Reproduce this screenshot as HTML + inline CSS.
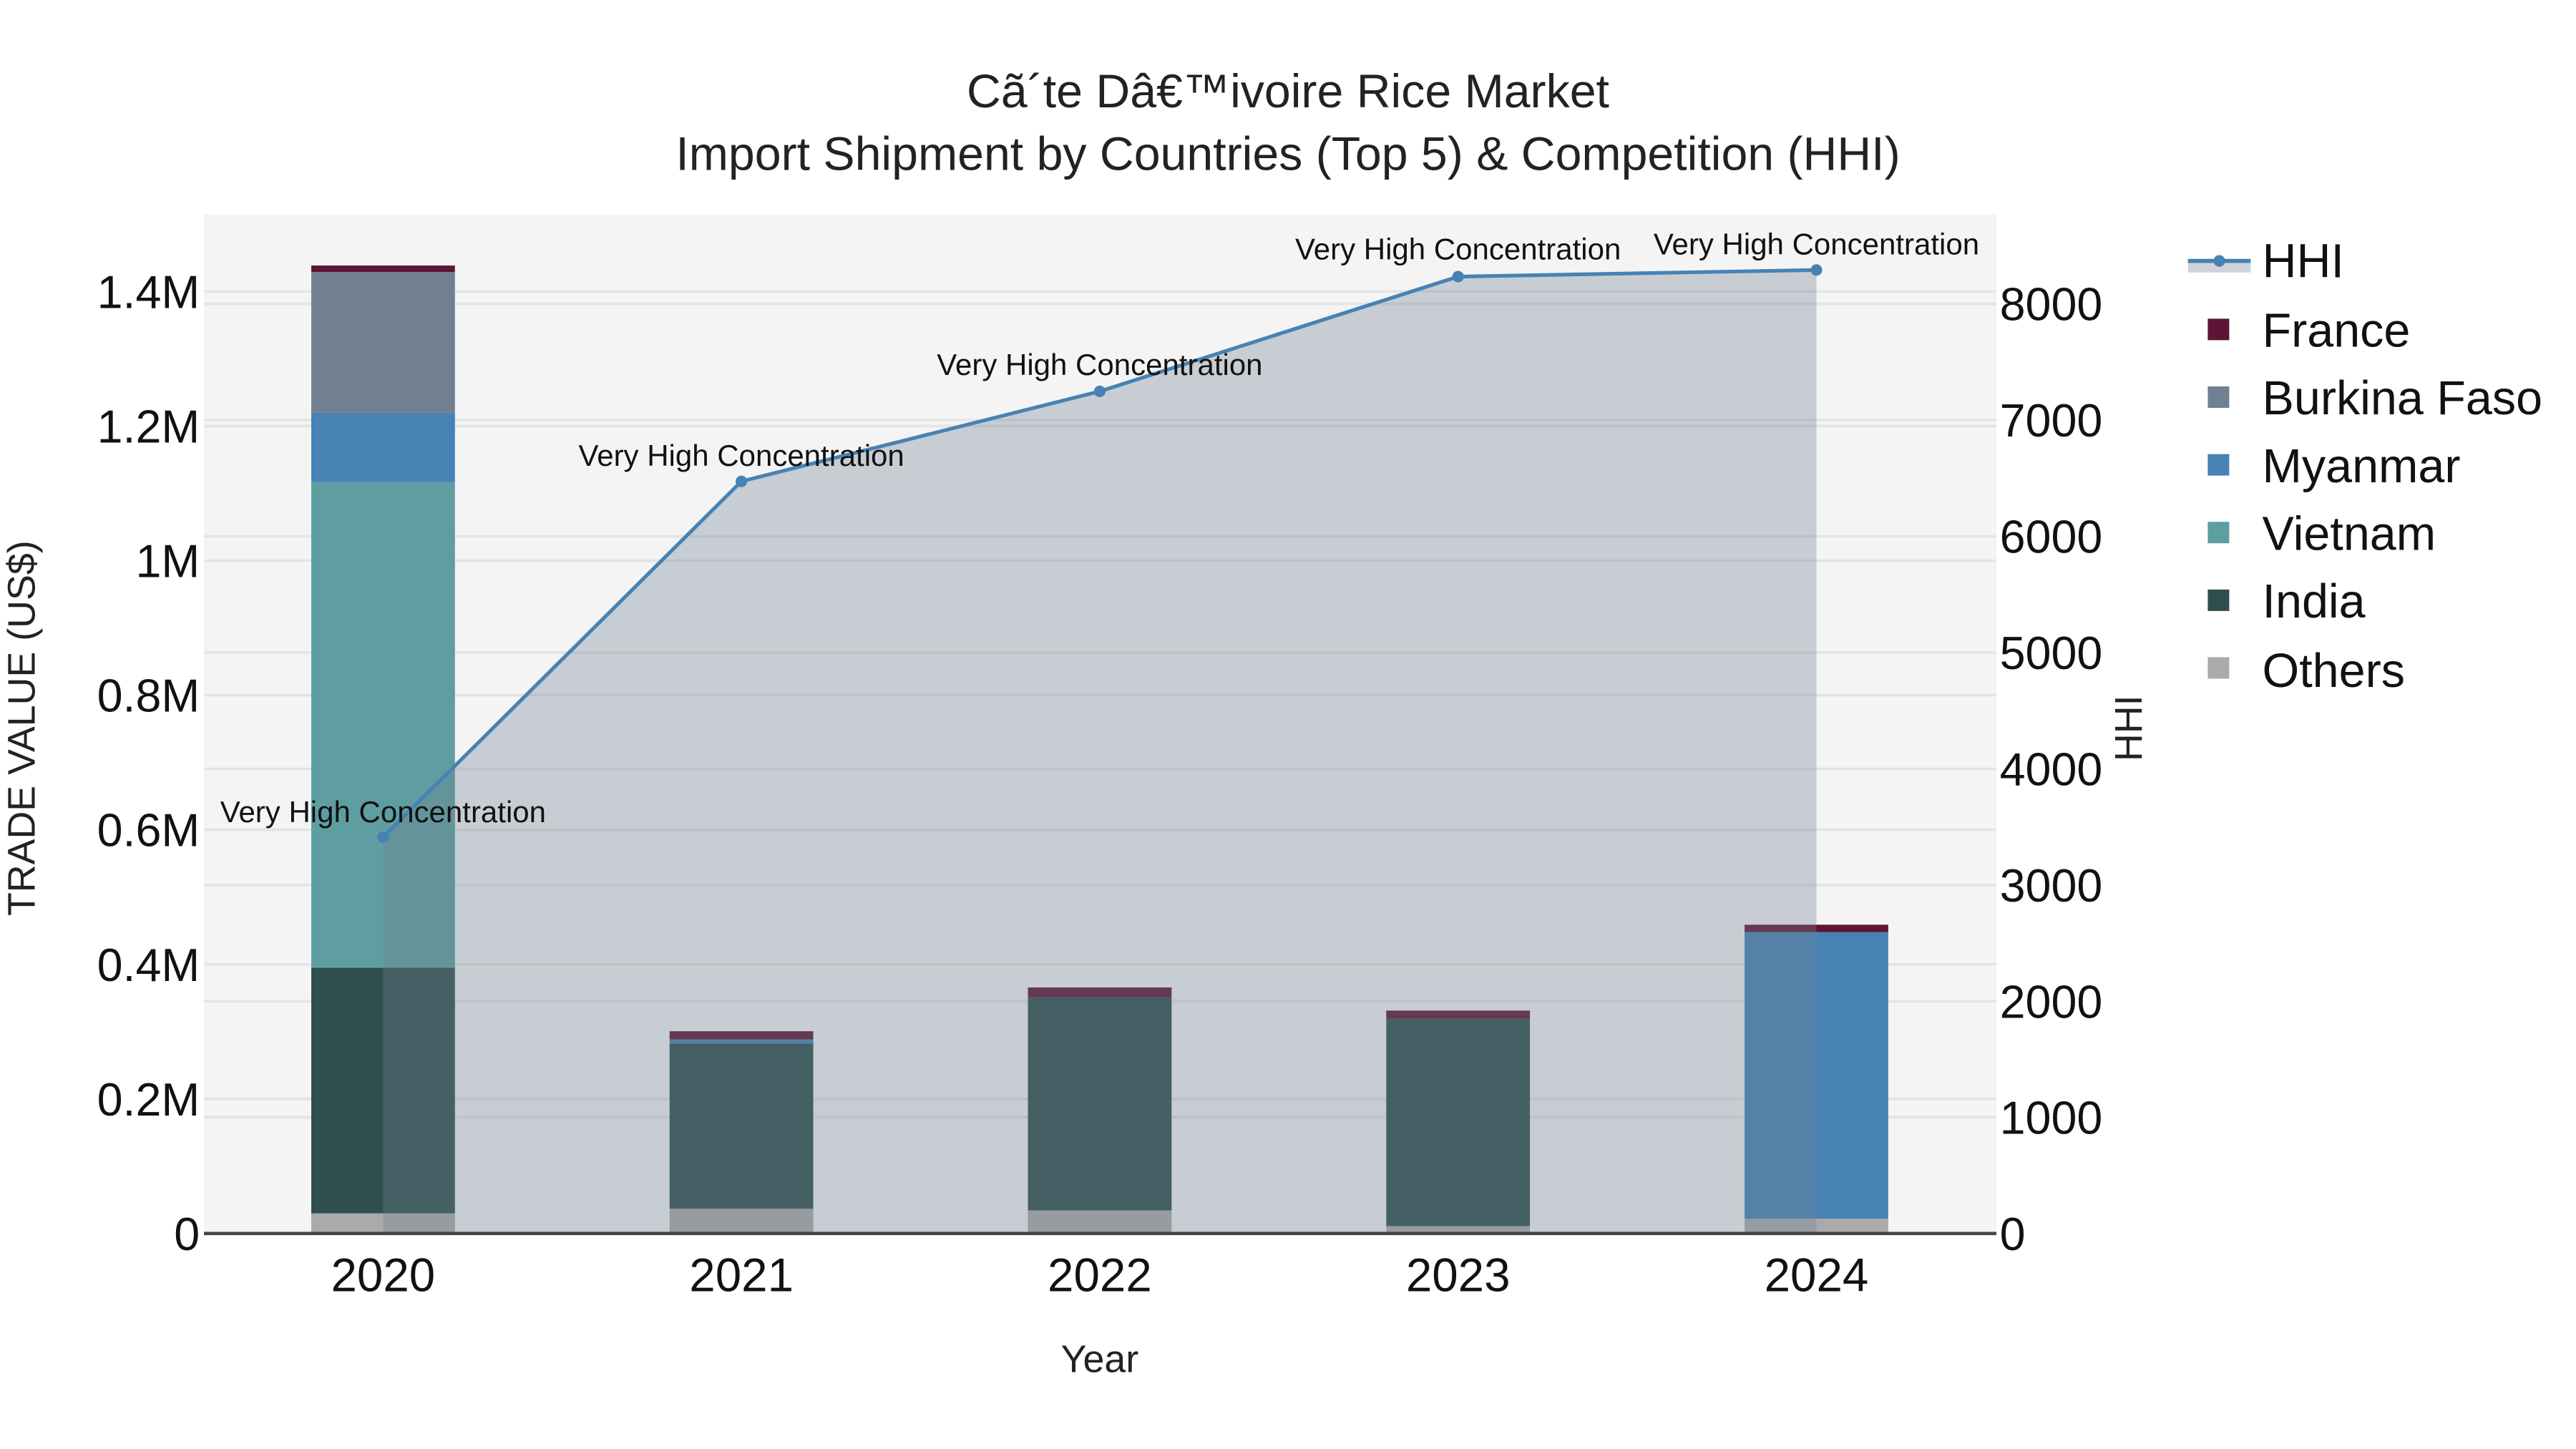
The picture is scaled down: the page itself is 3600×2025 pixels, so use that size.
<!DOCTYPE html>
<html><head><meta charset="utf-8">
<style>
html,body{margin:0;padding:0;background:#fff;}
svg{display:block;}
text{font-family:"Liberation Sans",Arial,sans-serif;}
</style></head>
<body>
<svg width="3600" height="2025" viewBox="0 0 1560 877.5" xmlns="http://www.w3.org/2000/svg">
<rect x="0" y="0" width="1560" height="877.5" fill="#fff"/>
<rect x="123.5" y="130" width="1085.5" height="617" fill="#f4f4f4"/>
<g stroke="#e4e4e4" stroke-width="1.6">
<line x1="123.5" x2="1209" y1="665.5" y2="665.5"/>
<line x1="123.5" x2="1209" y1="584" y2="584"/>
<line x1="123.5" x2="1209" y1="502.5" y2="502.5"/>
<line x1="123.5" x2="1209" y1="421" y2="421"/>
<line x1="123.5" x2="1209" y1="339.5" y2="339.5"/>
<line x1="123.5" x2="1209" y1="258" y2="258"/>
<line x1="123.5" x2="1209" y1="176.5" y2="176.5"/>
<line x1="123.5" x2="1209" y1="676.6" y2="676.6"/>
<line x1="123.5" x2="1209" y1="606.4" y2="606.4"/>
<line x1="123.5" x2="1209" y1="536" y2="536"/>
<line x1="123.5" x2="1209" y1="465.6" y2="465.6"/>
<line x1="123.5" x2="1209" y1="395.2" y2="395.2"/>
<line x1="123.5" x2="1209" y1="324.8" y2="324.8"/>
<line x1="123.5" x2="1209" y1="254.4" y2="254.4"/>
<line x1="123.5" x2="1209" y1="184" y2="184"/>
</g>
<g>
<rect x="188.5" y="734.8" width="87" height="12.2" fill="#aaaaaa"/>
<rect x="188.5" y="586" width="87" height="148.8" fill="#2f4f4f"/>
<rect x="188.5" y="292" width="87" height="294" fill="#5f9ea0"/>
<rect x="188.5" y="250" width="87" height="42" fill="#4682b4"/>
<rect x="188.5" y="164.7" width="87" height="85.3" fill="#708090"/>
<rect x="188.5" y="160.8" width="87" height="3.9" fill="#5e1434"/>
<rect x="405.5" y="732" width="87" height="15" fill="#aaaaaa"/>
<rect x="405.5" y="632" width="87" height="100" fill="#2f4f4f"/>
<rect x="405.5" y="629.5" width="87" height="2.5" fill="#4682b4"/>
<rect x="405.5" y="624.5" width="87" height="5" fill="#5e1434"/>
<rect x="622.5" y="733" width="87" height="14" fill="#aaaaaa"/>
<rect x="622.5" y="604" width="87" height="129" fill="#2f4f4f"/>
<rect x="622.5" y="598" width="87" height="6" fill="#5e1434"/>
<rect x="839.5" y="742.5" width="87" height="4.5" fill="#aaaaaa"/>
<rect x="839.5" y="617" width="87" height="125.5" fill="#2f4f4f"/>
<rect x="839.5" y="612" width="87" height="5" fill="#5e1434"/>
<rect x="1056.5" y="738" width="87" height="9" fill="#aaaaaa"/>
<rect x="1056.5" y="564.5" width="87" height="173.5" fill="#4682b4"/>
<rect x="1056.5" y="560" width="87" height="4.5" fill="#5e1434"/>
</g>
<polygon points="232,747 232,507 449,291.5 666,237 883,167.5 1100,163.5 1100,747" fill="rgb(112,128,144)" fill-opacity="0.34"/>
<line x1="123.5" x2="1209" y1="747" y2="747" stroke="#444" stroke-width="2"/>
<polyline points="232,507 449,291.5 666,237 883,167.5 1100,163.5" fill="none" stroke="#4682b4" stroke-width="2.2"/>
<g fill="#4682b4">
<circle cx="232" cy="507" r="3.5"/><circle cx="449" cy="291.5" r="3.5"/><circle cx="666" cy="237" r="3.5"/><circle cx="883" cy="167.5" r="3.5"/><circle cx="1100" cy="163.5" r="3.5"/>
</g>
<g font-size="18.2" fill="#111" text-anchor="middle">
<text x="232" y="498">Very High Concentration</text>
<text x="449" y="282">Very High Concentration</text>
<text x="666" y="227">Very High Concentration</text>
<text x="883" y="157">Very High Concentration</text>
<text x="1100" y="154">Very High Concentration</text>
</g>
<g font-size="28" fill="#111" text-anchor="end">
<text x="121" y="757">0</text>
<text x="121" y="675.5">0.2M</text>
<text x="121" y="594">0.4M</text>
<text x="121" y="512.5">0.6M</text>
<text x="121" y="431">0.8M</text>
<text x="121" y="349.5">1M</text>
<text x="121" y="268">1.2M</text>
<text x="121" y="186.5">1.4M</text>
</g>
<g font-size="28" fill="#111" text-anchor="start">
<text x="1211" y="757">0</text>
<text x="1211" y="686.6">1000</text>
<text x="1211" y="616.4">2000</text>
<text x="1211" y="546">3000</text>
<text x="1211" y="475.6">4000</text>
<text x="1211" y="405.2">5000</text>
<text x="1211" y="334.8">6000</text>
<text x="1211" y="264.4">7000</text>
<text x="1211" y="194">8000</text>
</g>
<g font-size="28.4" fill="#111" text-anchor="middle">
<text x="232" y="782">2020</text>
<text x="449" y="782">2021</text>
<text x="666" y="782">2022</text>
<text x="883" y="782">2023</text>
<text x="1100" y="782">2024</text>
</g>
<text x="666" y="831" font-size="23.3" fill="#222" text-anchor="middle">Year</text>
<text transform="translate(21,441) rotate(-90)" font-size="23.3" fill="#222" text-anchor="middle">TRADE VALUE (US$)</text>
<text transform="translate(1297,441) rotate(-90)" font-size="23.3" fill="#222" text-anchor="middle">HHI</text>
<text x="780" y="65" font-size="28.7" fill="#222" text-anchor="middle">Cã´te Dâ€™ivoire Rice Market</text>
<text x="780" y="103" font-size="28.7" fill="#222" text-anchor="middle">Import Shipment by Countries (Top 5) &amp; Competition (HHI)</text>
<rect x="1325" y="158" width="38" height="7" fill="#d0d4da"/>
<line x1="1325" x2="1363" y1="158" y2="158" stroke="#4682b4" stroke-width="2.5"/>
<circle cx="1344" cy="158" r="3.5" fill="#4682b4"/>
<g font-size="28.8" fill="#111">
<text x="1370" y="168">HHI</text>
<text x="1370" y="210">France</text>
<text x="1370" y="251">Burkina Faso</text>
<text x="1370" y="292">Myanmar</text>
<text x="1370" y="333">Vietnam</text>
<text x="1370" y="374">India</text>
<text x="1370" y="416">Others</text>
</g>
<rect x="1337" y="193" width="13" height="13" fill="#5e1434"/>
<rect x="1337" y="234" width="13" height="13" fill="#708090"/>
<rect x="1337" y="275" width="13" height="13" fill="#4682b4"/>
<rect x="1337" y="316" width="13" height="13" fill="#5f9ea0"/>
<rect x="1337" y="357" width="13" height="13" fill="#2f4f4f"/>
<rect x="1337" y="398" width="13" height="13" fill="#aaaaaa"/>
</svg>
</body></html>
